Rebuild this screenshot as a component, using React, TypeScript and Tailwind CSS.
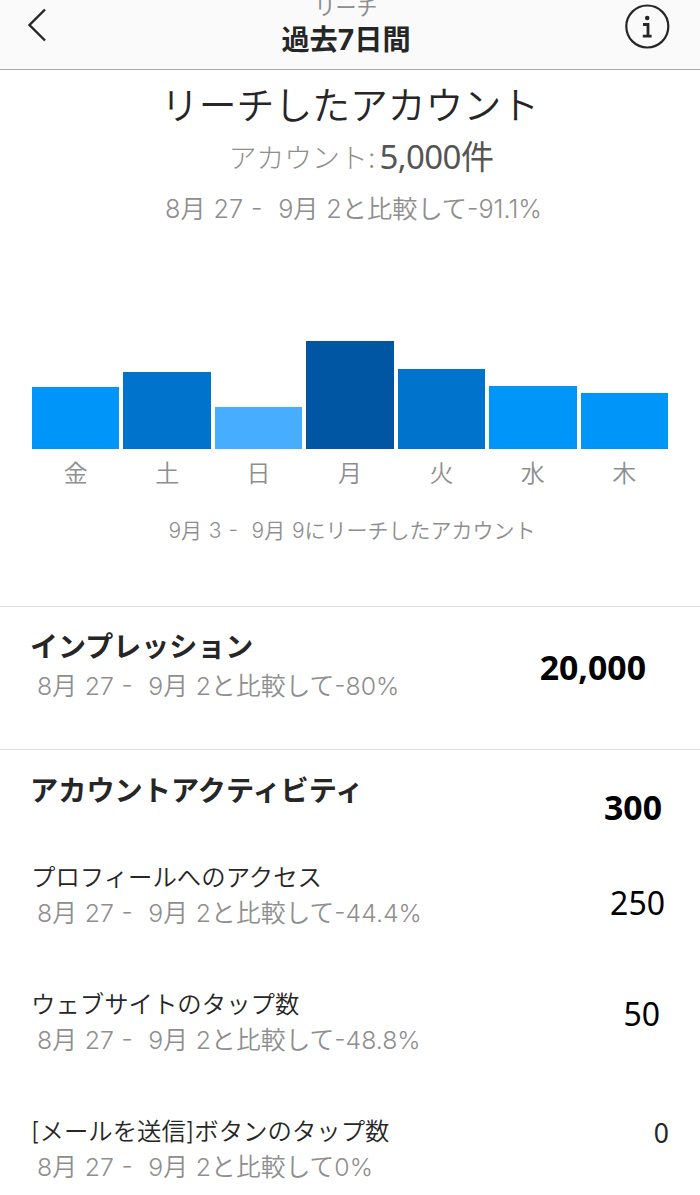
import React from "react";

interface Bar {
  day: string;
  height: number;
  color: string;
}

interface Activity {
  label: string;
  change: string;
  value: string;
  valueClass: string;
}

const BARS: Bar[] = [
  { day: "金", height: 62, color: "bg-[#0095f8]" },
  { day: "土", height: 77, color: "bg-[#0074cc]" },
  { day: "日", height: 42, color: "bg-[#47adff]" },
  { day: "月", height: 108, color: "bg-[#0056a3]" },
  { day: "火", height: 80, color: "bg-[#0074cc]" },
  { day: "水", height: 63, color: "bg-[#0095f8]" },
  { day: "木", height: 56, color: "bg-[#0095f8]" }
];

const ACTIVITIES: Activity[] = [
  {
    label: "プロフィールへのアクセス",
    change: "-44.4%",
    value: "250",
    valueClass: "pt-[22px] pr-[35px] text-[32px] leading-[44px] text-black"
  },
  {
    label: "ウェブサイトのタップ数",
    change: "-48.8%",
    value: "50",
    valueClass: "pt-[6px] pr-[40px] text-[32px] leading-[44px] text-black"
  },
  {
    label: "[メールを送信]ボタンのタップ数",
    change: "0%",
    value: "0",
    valueClass: "pr-[31px] text-[26.5px] leading-[40px] text-[#262626]"
  }
];

const numberFont = "font-['Noto_Sans','Noto_Sans_CJK_JP',sans-serif]";

function Comparison({ change }: { change: string }) {
  return (
    <p className="pl-[7px] text-[24.8px] leading-[36px] font-[350] whitespace-pre text-[#8e8e8e] [word-spacing:0.8px]">
      {"8月 27 -  9月 2と比較して" + change}
    </p>
  );
}

function Header() {
  return (
    <header className="flex h-[70px] justify-between border-b border-[#a8a8a8] bg-[#fafafa] text-[#262626]">
      <button aria-label="戻る" className="h-[50px] w-[100px] pl-[26px]">
        <svg width="22" height="36" viewBox="0 0 22 36" fill="none" stroke="currentColor" strokeWidth="2.4">
          <path d="M19 2.5 L3.5 18 L19 33.5" />
        </svg>
      </button>
      <div className="flex flex-col items-center pr-[8px]">
        <span className="text-[21px] leading-[16px] text-[#8e8e8e]">リーチ</span>
        <h1 className="mt-[4px] text-[28.2px] leading-[40px] font-bold">過去7日間</h1>
      </div>
      <button aria-label="情報" className="h-[54px] w-[100px] pl-[25px]">
        <svg width="46" height="46" viewBox="0 0 46 46" fill="none" stroke="currentColor">
          <circle cx="22.3" cy="22.5" r="21" strokeWidth="2.2" />
          <circle cx="22.2" cy="14" r="2.3" fill="currentColor" stroke="none" />
          <path d="M18 20.5 H23 V32 M17.8 32.2 H26.6" strokeWidth="2.8" />
        </svg>
      </button>
    </header>
  );
}

export default function App() {
  return (
    <div className="h-[1195px] w-[700px] overflow-hidden bg-white font-['Inter','Noto_Sans_CJK_JP',sans-serif] text-[#262626]">
      <Header />

      <section className="flex h-[536px] flex-col items-center">
        <h2 className="mt-[8px] text-[37.8px] leading-[54px] font-[350]">リーチしたアカウント</h2>
        <div className="flex h-[50px] items-center pl-[22px] text-[27.8px] text-[#8e8e8e]">
          <span className="pt-[4px] font-light">アカウント:</span>
          <span className={`${numberFont} ml-[4px] text-[33px] tracking-[-0.6px] text-[#555555]`}>5,000件</span>
        </div>
        <p className="mt-[9px] pl-[7px] text-[25.2px] leading-[36px] font-[350] whitespace-pre text-[#8e8e8e] [word-spacing:0.8px]">
          {"8月 27 -  9月 2と比較して-91.1%"}
        </p>

        <div className="mt-[114px] flex h-[108px] w-[636px] items-end gap-[4px]">
          {BARS.map((bar) => (
            <div key={bar.day} className={`flex-1 ${bar.color}`} style={{ height: bar.height }} />
          ))}
        </div>
        <div className="mt-[7px] flex w-[636px] gap-[4px] text-[24px] leading-[36px] font-[350] text-[#8e8e8e]">
          {BARS.map((bar) => (
            <span key={bar.day} className="flex-1 text-center">{bar.day}</span>
          ))}
        </div>
        <p className="mt-[24px] pl-[4px] text-[21px] leading-[30px] font-[350] whitespace-pre text-[#8e8e8e] [word-spacing:0.9px]">
          {"9月 3 -  9月 9にリーチしたアカウント"}
        </p>
      </section>

      <section className="flex h-[143px] items-start justify-between border-t border-[#dedede] pt-[19px] pl-[30px]">
        <div>
          <h3 className="text-[28px] leading-[42px] font-bold">インプレッション</h3>
          <Comparison change="-80%" />
        </div>
        <span className={`${numberFont} pt-[19px] pr-[54px] text-[33.8px] leading-[44px] font-bold text-black`}>20,000</span>
      </section>

      <section className="border-t border-[#dedede] pt-[19px] pl-[30px]">
        <div className="flex h-[90px] items-start justify-between">
          <h3 className="pt-px text-[28.2px] leading-[42px] font-bold">アカウントアクティビティ</h3>
          <span className={`${numberFont} pt-[16px] pr-[38px] text-[33.8px] leading-[44px] font-bold text-black`}>300</span>
        </div>
        {ACTIVITIES.map((item) => (
          <div key={item.label} className="flex h-[127px] items-start justify-between">
            <div>
              <h4 className="pl-px text-[24.4px] leading-[36px] font-[350]">{item.label}</h4>
              <Comparison change={item.change} />
            </div>
            <span className={`${numberFont} ${item.valueClass}`}>{item.value}</span>
          </div>
        ))}
      </section>
    </div>
  );
}
